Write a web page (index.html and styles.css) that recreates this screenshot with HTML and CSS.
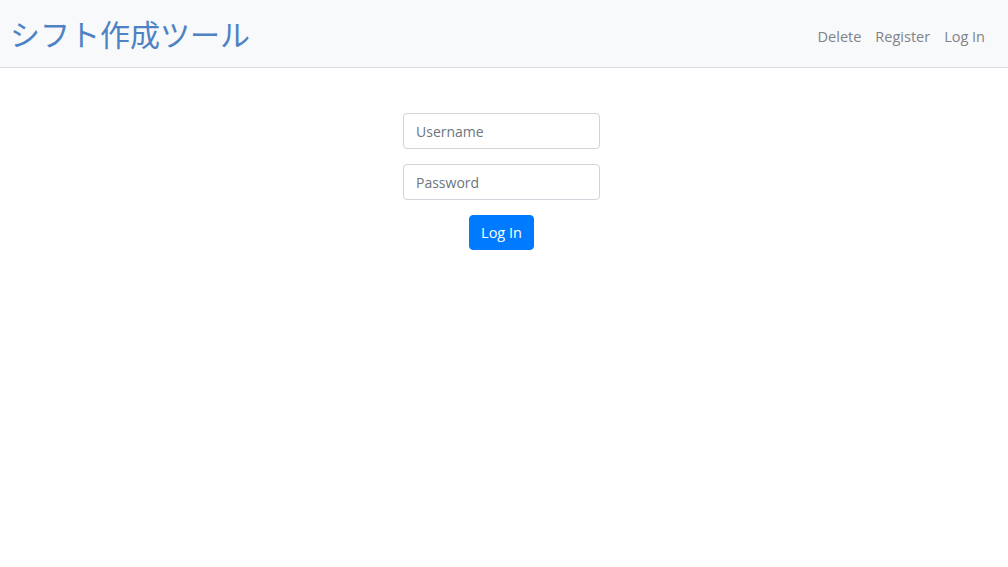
FILE: index.html
```html
<!DOCTYPE html>
<html lang="ja">
<head>
<meta charset="utf-8">
<title>シフト作成ツール</title>
<link rel="stylesheet" href="styles.css">
</head>
<body>
<nav class="navbar">
  <a class="brand" href="#">シフト作成ツール</a>
  <ul class="nav-links">
    <li><a href="#">Delete</a></li>
    <li><a href="#">Register</a></li>
    <li><a href="#">Log In</a></li>
  </ul>
</nav>
<main class="main">
  <form class="login-form">
    <input class="field" type="text" placeholder="Username">
    <input class="field" type="password" placeholder="Password">
    <button class="btn" type="button">Log In</button>
  </form>
</main>
</body>
</html>
```

FILE: styles.css
```css
* { box-sizing: border-box; }
html, body { margin: 0; padding: 0; }
body {
  font-family: "Open Sans", "Noto Sans", "Noto Sans CJK JP", sans-serif;
  font-size: 15px;
  color: #212529;
  background: #fff;
  width: 1008px;
  height: 567px;
  overflow: hidden;
}
.navbar {
  height: 68px;
  background: #f8f9fa;
  border-bottom: 1px solid #dcdde0;
  display: flex;
  align-items: center;
  justify-content: space-between;
  padding: 0 16px 0 10px;
}
.brand {
  font-family: "Noto Sans CJK JP", sans-serif;
  font-size: 30px;
  color: #4e82c4;
  text-decoration: none;
  line-height: 1;
  margin-top: -2px;
}
.nav-links {
  list-style: none;
  display: flex;
  margin: 6px 0 0 0;
  padding: 0;
}
.nav-links a {
  display: block;
  padding: 0 7px;
  color: #808488;
  text-decoration: none;
  font-size: 14.5px;
}
.main {
  display: flex;
  justify-content: center;
  padding: 45px 5px 0 0;
}
.login-form {
  display: flex;
  flex-direction: column;
  align-items: center;
  gap: 15px;
  width: 197px;
}
.field {
  width: 197px;
  height: 36px;
  border: 1px solid #ced4da;
  border-radius: 4px;
  padding: 0 12px;
  font-family: inherit;
  font-size: 14px;
  color: #495057;
}
.field::placeholder { color: #6c757d; }
.btn {
  height: 35px;
  padding: 0 11px;
  background: #007bff;
  color: #fff;
  border: 1px solid #007bff;
  border-radius: 4px;
  font-family: inherit;
  font-size: 14.5px;
}
```
